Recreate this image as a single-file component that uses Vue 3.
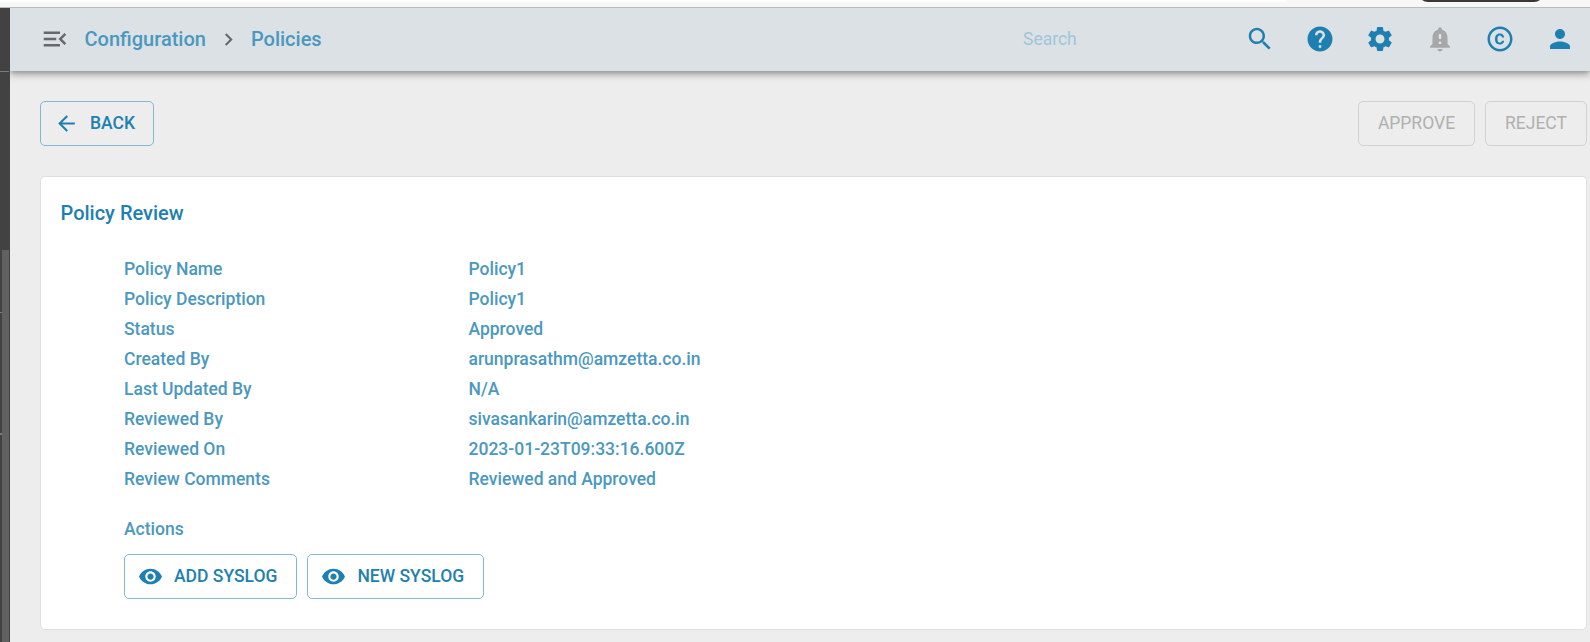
<script setup>
const tools = [
  { id: 'search', d: 'M15.5 14h-.79l-.28-.27C15.41 12.59 16 11.11 16 9.5 16 5.91 13.09 3 9.5 3S3 5.91 3 9.5 5.91 16 9.5 16c1.61 0 3.09-.59 4.23-1.57l.27.28v.79l5 4.99L20.49 19l-4.99-5zm-6 0C7.01 14 5 11.99 5 9.5S7.01 5 9.5 5 14 7.01 14 9.5 11.99 14 9.5 14z' },
  { id: 'help', d: 'M12 2C6.48 2 2 6.48 2 12s4.48 10 10 10 10-4.48 10-10S17.52 2 12 2zm1 17h-2v-2h2v2zm2.07-7.75l-.9.92C13.45 12.9 13 13.5 13 15h-2v-.5c0-1.1.45-2.1 1.17-2.83l1.24-1.26c.37-.36.59-.86.59-1.41 0-1.1-.9-2-2-2s-2 .9-2 2H8c0-2.21 1.79-4 4-4s4 1.79 4 4c0 .88-.36 1.68-.93 2.25z' },
  { id: 'settings', d: 'M19.14 12.94c.04-.3.06-.61.06-.94 0-.32-.02-.64-.07-.94l2.03-1.58c.18-.14.23-.41.12-.61l-1.92-3.32c-.12-.22-.37-.29-.59-.22l-2.39.96c-.5-.38-1.03-.7-1.62-.94l-.36-2.54c-.04-.24-.24-.41-.48-.41h-3.84c-.24 0-.43.17-.47.41l-.36 2.54c-.59.24-1.13.57-1.62.94l-2.39-.96c-.22-.08-.47 0-.59.22L2.74 8.87c-.12.21-.08.47.12.61l2.03 1.58c-.05.3-.09.63-.09.94s.02.64.07.94l-2.03 1.58c-.18.14-.23.41-.12.61l1.92 3.32c.12.22.37.29.59.22l2.39-.96c.5.38 1.03.7 1.62.94l.36 2.54c.05.24.24.41.48.41h3.84c.24 0 .44-.17.47-.41l.36-2.54c.59-.24 1.13-.56 1.62-.94l2.39.96c.22.08.47 0 .59-.22l1.92-3.32c.12-.22.07-.47-.12-.61l-2.01-1.58zM12 15.6c-1.98 0-3.6-1.62-3.6-3.6s1.62-3.6 3.6-3.6 3.6 1.62 3.6 3.6-1.62 3.6-3.6 3.6z' },
  { id: 'alerts', muted: true, d: 'M18 16v-5c0-3.07-1.64-5.64-4.5-6.32V4c0-.83-.67-1.5-1.5-1.5s-1.5.67-1.5 1.5v.68C7.63 5.36 6 7.92 6 11v5l-2 2v1h16v-1l-2-2zm-5 0h-2v-2h2v2zm0-4h-2V8h2v4zm-1 10c1.1 0 2-.9 2-2h-4c0 1.1.89 2 2 2z' },
  { id: 'copyright', d: 'M10.08 10.86c.05-.33.16-.62.3-.87s.34-.46.59-.62c.24-.15.54-.22.91-.23.23.01.44.05.63.13.2.09.38.21.52.36s.25.33.34.53.13.42.14.64h1.79c-.02-.47-.11-.9-.28-1.29s-.4-.73-.7-1.01-.66-.5-1.08-.66-.88-.23-1.39-.23c-.65 0-1.22.11-1.7.34s-.88.53-1.2.92-.56.84-.71 1.36S8 11.29 8 11.87v.27c0 .58.08 1.12.23 1.64s.39.97.71 1.35.72.69 1.2.91 1.05.34 1.7.34c.47 0 .91-.08 1.32-.23s.77-.36 1.08-.63.56-.58.74-.94.29-.74.3-1.15h-1.79c-.01.21-.06.4-.15.58s-.21.33-.36.46-.32.23-.52.3c-.19.07-.39.09-.6.1-.36-.01-.66-.08-.89-.23-.25-.16-.45-.37-.59-.62s-.25-.55-.3-.88-.08-.67-.08-1v-.27c0-.35.03-.68.08-1.01zM12 2C6.48 2 2 6.48 2 12s4.48 10 10 10 10-4.48 10-10S17.52 2 12 2zm0 18c-4.41 0-8-3.59-8-8s3.59-8 8-8 8 3.59 8 8-3.59 8-8 8z' },
  { id: 'account', d: 'M12 12c2.21 0 4-1.79 4-4s-1.79-4-4-4-4 1.79-4 4 1.79 4 4 4zm0 2c-2.67 0-8 1.34-8 4v2h16v-2c0-2.66-5.33-4-8-4z' },
]

const fields = [
  ['Policy Name', 'Policy1'],
  ['Policy Description', 'Policy1'],
  ['Status', 'Approved'],
  ['Created By', 'arunprasathm@amzetta.co.in'],
  ['Last Updated By', 'N/A'],
  ['Reviewed By', 'sivasankarin@amzetta.co.in'],
  ['Reviewed On', '2023-01-23T09:33:16.600Z'],
  ['Review Comments', 'Reviewed and Approved'],
]

const actions = ['ADD SYSLOG', 'NEW SYSLOG']
</script>

<template>
  <div class="screen">
    <div class="chrome">
      <div class="address"></div>
      <div class="pill"></div>
    </div>
    <div class="shell">
      <aside class="rail">
        <i class="tick tick-a"></i>
        <i class="tick tick-b"></i>
        <i class="tick tick-c"></i>
        <i class="thumb"></i>
      </aside>
      <div class="page">
        <header class="bar">
          <svg class="menu" viewBox="0 0 24 24"><path d="M3 18h13v-2H3v2zM3 6v2h13V6H3zm0 7h10v-2H3v2zm18-4.41L19.59 7.17 14.75 12l4.83 4.83L21 15.42 17.58 12 21 8.59z" /></svg>
          <nav class="crumbs">
            <span>Configuration</span>
            <svg class="chevron" viewBox="0 0 24 24"><path d="M10 6L8.59 7.41 13.17 12l-4.58 4.59L10 18l6-6z" /></svg>
            <span>Policies</span>
          </nav>
          <div class="search">Search</div>
          <div class="tools">
            <svg v-for="t in tools" :key="t.id" :class="{ muted: t.muted }" viewBox="0 0 24 24"><path :d="t.d" /></svg>
          </div>
        </header>
        <main>
          <div class="row">
            <button class="btn back">
              <svg viewBox="0 0 24 24"><path d="M20 11H7.83l5.59-5.59L12 4l-8 8 8 8 1.41-1.41L7.83 13H20v-2z" /></svg>
              <span>BACK</span>
            </button>
            <div class="decide">
              <button class="btn off approve"><span>APPROVE</span></button>
              <button class="btn off reject"><span>REJECT</span></button>
            </div>
          </div>
          <section class="card">
            <h1>Policy Review</h1>
            <dl>
              <template v-for="f in fields" :key="f[0]">
                <dt><span>{{ f[0] }}</span></dt>
                <dd><span>{{ f[1] }}</span></dd>
              </template>
            </dl>
            <h2>Actions</h2>
            <div class="actions">
              <button v-for="a in actions" :key="a" class="btn">
                <svg viewBox="0 0 24 24"><path d="M12 4.5C7 4.5 2.73 7.61 1 12c1.73 4.39 6 7.5 11 7.5s9.27-3.11 11-7.5c-1.73-4.39-6-7.5-11-7.5zM12 17c-2.76 0-5-2.24-5-5s2.24-5 5-5 5 2.24 5 5-2.24 5-5 5zm0-8c-1.66 0-3 1.34-3 3s1.34 3 3 3 3-1.34 3-3-1.34-3-3-3z" /></svg>
                <span>{{ a }}</span>
              </button>
            </div>
          </section>
        </main>
      </div>
    </div>
  </div>
</template>

<style>
body { margin: 0; overflow: hidden; }
</style>

<style scoped>
* { box-sizing: border-box; }
.screen { width: 1590px; height: 642px; display: flex; flex-direction: column; overflow: hidden; font-family: Roboto, "Liberation Sans", sans-serif; font-weight: 500; color: #4b98be; }
svg { fill: currentColor; display: block; flex: none; }
.chrome { position: relative; flex: none; height: 8px; background: #f7f7f7; border-bottom: 1px solid #b9bcbe; overflow: hidden; }
.address { width: 1286px; height: 2px; background: #fff; border-radius: 0 0 12px 0; }
.pill { position: absolute; left: 1418px; top: -20px; width: 126px; height: 22px; border-radius: 10px; background: #3b3638; }
.shell { flex: 1; display: flex; min-height: 0; }
.rail { position: relative; flex: none; width: 10px; background: #424242; }
.rail i { position: absolute; display: block; }
.tick { left: 0; height: 1px; background: #7c7c7c; }
.tick-a { top: 63px; width: 9px; }
.tick-b { top: 304px; width: 2px; }
.tick-c { top: 425px; width: 2px; height: 2px; }
.thumb { left: 2px; top: 242px; width: 7px; bottom: 0; background: #616161; }
.page { flex: 1; display: flex; flex-direction: column; background: #ededed; overflow: hidden; }
.bar { flex: none; height: 63px; padding: 0 15px 1px 30px; display: flex; align-items: center; background: #dce1e5; box-shadow: 0 2px 5px -1px rgba(0,0,0,.28), 0 5px 6px rgba(0,0,0,.14), 0 1px 12px rgba(0,0,0,.12); }
.menu { width: 30px; height: 30px; color: #65696c; }
.crumbs { display: flex; align-items: center; margin-left: 14.5px; font-size: 20px; line-height: 30px; }
.chevron { width: 25px; height: 25px; margin: 0 10px; color: #65696c; }
.search { margin-left: auto; width: 222px; font-size: 17.5px; line-height: 20px; font-weight: 400; color: #a0c6d8; }
.tools { display: flex; gap: 30px; color: #1e80b0; }
.tools svg { width: 30px; height: 30px; }
.tools .muted { color: #a4a8ab; }
main { padding: 30px 3px 0 30px; }
.row { display: flex; justify-content: space-between; }
.decide { display: flex; gap: 10px; }
.btn { height: 45px; display: flex; align-items: center; padding: 0 19px 0 13px; border: 1px solid #83b8d1; border-radius: 5px; background: transparent; color: #1e80b0; font: 500 17.5px/30px Roboto, "Liberation Sans", sans-serif; white-space: nowrap; }
.btn svg { width: 25px; height: 25px; margin-right: 11px; }
.btn span { padding-bottom: 2px; }
.back { width: 114px; }
.off { padding: 0; justify-content: center; border-color: #d1d1d1; color: #b0b0b0; font-weight: 400; }
.approve { width: 117px; }
.reject { width: 102px; }
.card { height: 454px; margin-top: 30px; padding: 20px; border: 1px solid #dfdfdf; border-radius: 5px; background: #fff; }
h1 { margin: 0 0 0 -0.5px; font-size: 20px; line-height: 32px; font-weight: 500; color: #1e80b0; }
dl { margin: 25px 0 0 63px; display: grid; grid-template-columns: 344.5px 1fr; grid-auto-rows: 30px; font-size: 17.5px; line-height: 30px; }
dd { margin: 0; }
h2 { margin: 20px 0 0 63px; font-size: 17.5px; line-height: 30px; font-weight: 500; }
.actions { display: flex; gap: 10px; margin: 10px 0 0 63px; }
</style>
